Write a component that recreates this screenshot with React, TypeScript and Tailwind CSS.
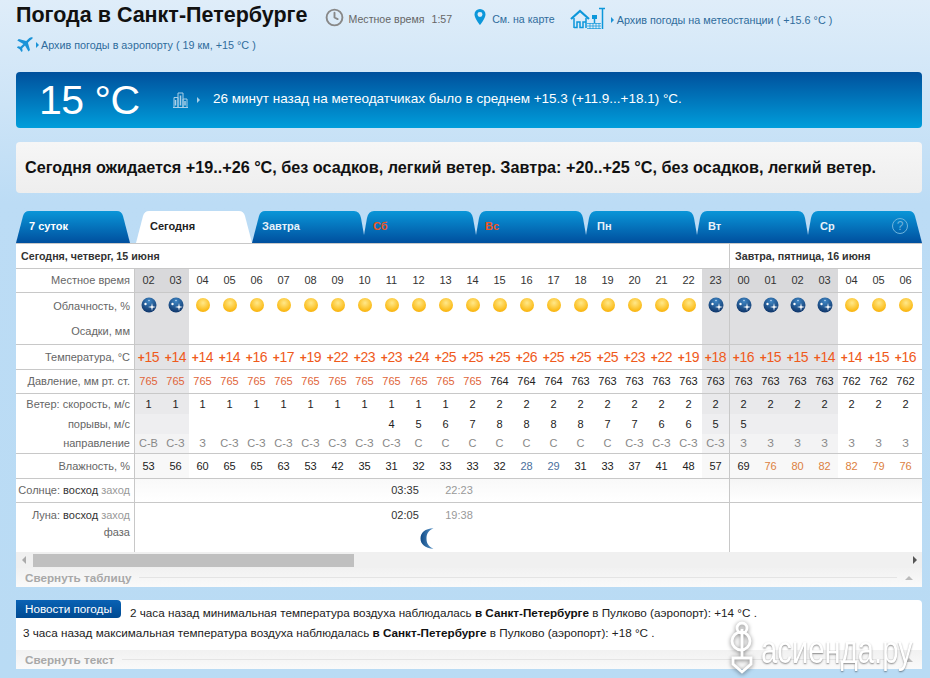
import React from 'react';
import clsx from 'clsx';
import { Clock } from 'lucide-react';

const hoursA = ['02','03','04','05','06','07','08','09','10','11','12','13','14','15','16','17','18','19','20','21','22','23'];
const hoursB = ['00','01','02','03','04','05','06'];
const nightA = [0, 1, 21];
const nightB = [0, 1, 2, 3];

const tempsA = [15,14,14,14,16,17,19,22,23,23,24,25,25,25,26,25,25,25,23,22,19,18];
const tempsB = [16,15,15,14,14,15,16];
const pressA = [765,765,765,765,765,765,765,765,765,765,765,765,765,764,764,764,763,763,763,763,763,763];
const pressB = [763,763,763,763,762,762,762];
const windA = [1,1,1,1,1,1,1,1,1,1,1,1,2,2,2,2,2,2,2,2,2,2];
const windB = [2,2,2,2,2,2,2];
const gustA = ['','','','','','','','','','4','5','6','7','8','8','8','8','7','7','6','6','5'];
const gustB = ['5','','','','','',''];
const dirA = ['С-В','С-З','З','С-З','С-З','С-З','С-З','С-З','С-З','С-З','С','С','С','С','С','С','С','С','С-З','С-З','С-З','С-З'];
const dirB = ['З','З','З','З','З','З','З'];
const humA = [53,56,60,65,65,63,53,42,35,31,32,33,33,32,28,29,31,33,37,41,48,57];
const humB = [69,76,80,82,82,79,76];

const humColor = (v: number) => (v >= 75 ? 'text-[#dc8040]' : v < 30 ? 'text-[#4a6f9c]' : 'text-[#222]');

function Caret({ className }: { className: string }) {
  return <span className={clsx('inline-block border-y-[3px] border-l-[3px] border-y-transparent', className)} />;
}

function SunIcon() {
  return <div className="w-[14px] h-[14px] rounded-full bg-[radial-gradient(circle_at_50%_35%,#ffe88a,#fbbd1c_65%,#f2a000)]" />;
}

function NightIcon() {
  return (
    <svg width="16" height="16" viewBox="0 0 16 16">
      <defs>
        <radialGradient id="nightFill" cx="50%" cy="25%" r="80%">
          <stop offset="0%" stopColor="#3f86c4" />
          <stop offset="100%" stopColor="#0b2f63" />
        </radialGradient>
      </defs>
      <circle cx="8" cy="8" r="7.5" fill="url(#nightFill)" />
      <path d="M11 6 L11.7 9.3 L15 10 L11.7 10.7 L11 14 L10.3 10.7 L7 10 L10.3 9.3 Z" fill="#fff" />
      <circle cx="4.5" cy="7" r="1.2" fill="#fff" />
      <circle cx="8" cy="3.5" r="0.7" fill="#dbeafe" />
    </svg>
  );
}

function PinIcon() {
  return (
    <svg width="12" height="16" viewBox="0 0 13 18" className="block">
      <path fillRule="evenodd" d="M6.5 0A6.2 6.2 0 0 0 .3 6.2C.3 10.4 6.5 18 6.5 18s6.2-7.6 6.2-11.8A6.2 6.2 0 0 0 6.500 0Zm0 3.4a2.8 2.8 0 1 1 0 5.600 2.8 2.8 0 0 1 0-5.600Z" fill="#0c97da" />
    </svg>
  );
}

function StationIcon() {
  return (
    <svg width="35" height="22" viewBox="0 0 35 22" fill="none" stroke="#0c97da" className="block">
      <path d="M1 12 L10 4 L19 12" strokeWidth="2.200" />
      <path d="M4 21 V11 M16 21 V11 M4 20.500 H7 V15 H10 V20.500 H13 V15 H16" strokeWidth="1.500" />
      <rect x="22" y="8" width="5" height="4" fill="#0c97da" stroke="none" />
      <path d="M24.500 12 V16" strokeWidth="1.500" />
      <path d="M17 16.500 H31 M17 19 H31 M17 21.500 H31 M20 16 V22 M23 16 V22 M26 16 V22 M29 16 V22" strokeWidth="0.700" />
      <path d="M32.500 22 V2 M29 1.500 H35" strokeWidth="1.500" />
    </svg>
  );
}

function PlaneIcon() {
  return (
    <svg width="17" height="16" viewBox="0 0 17 16">
      <path d="M16.600 0.500C15.600 -.1 13.800 .5 12.600 1.700L10.200 4.100 2.800 2 1.300 3.500 7.400 6.900 4.600 9.700 2 9.300.9 10.400 3.700 12.200 5.500 15 6.600 13.900 6.200 11.300 9 8.500 12.500 14.600 14 13.100 11.900 5.700 14.300 3.300C15.500 2.100 17.200 1.400 16.600.5Z" fill="#1a93d8" />
    </svg>
  );
}

function BuildingIcon() {
  return (
    <svg width="15" height="16" viewBox="0 0 15 16" fill="none" stroke="#a9cfe8" strokeWidth="1">
      <path d="M1 15.500 V5.500 H5 V15.500 M5 15.500 V1 H10 V15.500 M10 15.500 V7 H14 V15.500 M0 15.500 H15" />
      <path d="M2.500 8 V13.500 M7.500 3.500 V13.500 M12 9 V13.500" strokeWidth="1.500" />
    </svg>
  );
}

function MoonPhase() {
  return (
    <svg width="15" height="21" viewBox="0 0 15 21">
      <defs>
        <linearGradient id="moonFill" x1="0" y1="0" x2="1" y2="0">
          <stop offset="0%" stopColor="#0f4a86" />
          <stop offset="100%" stopColor="#5a95c8" />
        </linearGradient>
      </defs>
      <path d="M13.500 0.300 C5 0.500 0.500 5 0.500 10.500 C0.500 16 5 20.500 13.500 20.700 C8 18.500 6.500 14.500 6.500 10.500 C6.500 6.500 8 2.500 13.500 0.300 Z" fill="url(#moonFill)" />
    </svg>
  );
}

// Tab outline: a straight slanted edge or the narrow notch shared with the neighbouring tab
function tabPath(w: number, straightLeft: boolean, straightRight: boolean) {
  const left = straightLeft ? 'M0 32 L7 5 Q8.500 0 13 0' : 'M0 32 L0 24 L3 7 Q4.500 0 10 0';
  const right = straightRight
    ? `L${w - 13} 0 Q${w - 8.5} 0 ${w - 7} 5 L${w} 32 Z`
    : `L${w - 10} 0 Q${w - 4.5} 0 ${w - 3} 7 L${w} 24 L${w} 32 Z`;
  return `${left} ${right}`;
}

const tabs = [
  { label: '7 суток', w: 114, l: true, r: true, text: 'text-white', pad: 'pl-[13px]' },
  { label: 'Сегодня', w: 116, l: true, r: true, text: 'text-[#222]', pad: 'pl-[14px]', active: true },
  { label: 'Завтра', w: 112, l: true, r: false, text: 'text-[#e8f2fa]', pad: 'pl-[10px]' },
  { label: 'Сб', w: 112, l: false, r: false, text: 'text-[#f0561e]', pad: 'pl-[9px]' },
  { label: 'Вс', w: 110, l: false, r: false, text: 'text-[#f0561e]', pad: 'pl-[9px]' },
  { label: 'Пн', w: 111, l: false, r: false, text: 'text-[#e8f2fa]', pad: 'pl-[11px]' },
  { label: 'Вт', w: 111, l: false, r: false, text: 'text-[#e8f2fa]', pad: 'pl-[11px]' },
  { label: 'Ср', w: 114, l: false, r: true, text: 'text-[#e8f2fa]', pad: 'pl-[12px]' },
];

function Tabs() {
  return (
    <div className="flex h-[32px] font-bold text-[11px]">
      <svg width="0" height="0" className="absolute">
        <defs>
          <linearGradient id="tabFill" x1="0" y1="0" x2="0" y2="1">
            <stop offset="0%" stopColor="#0a96d8" />
            <stop offset="100%" stopColor="#004f9e" />
          </linearGradient>
        </defs>
      </svg>
      {tabs.map((t, i) => (
        <div
          key={t.label}
          className={clsx('relative shrink-0 h-[32px] flex items-center pb-[2px]', t.pad, t.text, i === 1 && 'ml-[6px]')}
          style={{ width: t.w }}
        >
          <svg className="absolute left-0 top-0" width={t.w} height="32">
            <path d={tabPath(t.w, t.l, t.r)} fill={t.active ? '#fff' : 'url(#tabFill)'} />
          </svg>
          <span className="relative">{t.label}</span>
          {t.label === 'Ср' && (
            <span className="absolute right-[14px] top-[7px] w-[16px] h-[16px] rounded-full border border-[#6fb4dd] text-[#6fb4dd] flex items-center justify-center text-[12px] font-normal">?</span>
          )}
        </div>
      ))}
    </div>
  );
}

type RowProps = {
  label?: React.ReactNode;
  h: string;
  night?: string;
  a: React.ReactNode[];
  b: React.ReactNode[];
  cellClass?: string;
  line?: boolean;
};

function Row({ label, h, night, a, b, cellClass, line }: RowProps) {
  const cell = (v: React.ReactNode, i: number, isNight: boolean) => (
    <div
      key={i}
      className={clsx('w-[27px] shrink-0 flex items-center justify-center whitespace-nowrap', isNight && night, cellClass)}
    >
      {v}
    </div>
  );
  return (
    <div className={clsx('flex', h, line && 'border-b border-[#c8c8c8]')}>
      <div className="w-[119px] shrink-0 border-r border-[#c8c8c8] flex items-center justify-end pr-[4px] text-[11px] text-[#666] whitespace-nowrap">
        {label}
      </div>
      {a.map((v, i) => cell(v, i, nightA.includes(i)))}
      <div className="w-px shrink-0 bg-[#c8c8c8]" />
      {b.map((v, i) => cell(v, i, nightB.includes(i)))}
    </div>
  );
}

function Temp({ v }: { v: number }) {
  return (
    <span className="text-[14px] text-[#ef5a1c] tracking-[-0.4px]">
      <span className="font-bold text-[12px]">+</span>
      {v}
    </span>
  );
}

const blank = (n: number) => Array.from({ length: n }, () => '');

function Collapse({ label }: { label: string }) {
  return (
    <div className="h-[19px] bg-gradient-to-b from-[#f1f1f1] to-[#fafafa] flex items-center pl-[9px] pr-[9px]">
      <span className="text-[11.7px] font-bold text-[#a8a8a8] whitespace-nowrap">{label}</span>
      <div className="flex-1 h-px bg-white border-t border-[#e4e4e4] ml-[8px] mr-[8px]" />
      <span className="border-x-[4px] border-b-[4px] border-x-transparent border-b-[#bbb]" />
    </div>
  );
}

export default function App() {
  return (
    <div className="relative w-[930px] h-[678px] overflow-hidden font-['Liberation_Sans',Arial,sans-serif] bg-gradient-to-b from-[#dfedf9] via-[#bcdcf5] via-30% to-[#b9dbf4]">
      <div className="pl-[16px] w-[922px]">
        {/* top links */}
        <div className="flex items-center h-[32px] text-[10.6px]">
          <h1 className="text-[21.5px] leading-none font-bold text-[#111] whitespace-nowrap">Погода в Санкт-Петербурге</h1>
          <Clock className="ml-[17px] mt-[2px] text-[#888]" size={19} strokeWidth={2.4} />
          <span className="ml-[5px] mt-[8px] text-[#666]">Местное время</span>
          <span className="ml-[7px] mt-[8px] text-[#666]">1:57</span>
          <span className="ml-[22px] mt-[2px]"><PinIcon /></span>
          <span className="ml-[6px] mt-[8px] text-[#2f6c9c]">См. на карте</span>
          <span className="ml-[15px] mt-[3px]"><StationIcon /></span>
          <Caret className="ml-[6px] mt-[8px] border-l-[#1a93d8]" />
          <span className="ml-[3px] mt-[8px] text-[10.8px] text-[#2f6c9c]">Архив погоды на метеостанции ( +15.6 °C )</span>
        </div>
        <div className="flex items-center h-[26px] text-[10.8px]">
          <PlaneIcon />
          <Caret className="ml-[3px] border-l-[#1a93d8]" />
          <span className="ml-[2px] text-[#2f6c9c]">Архив погоды в аэропорту ( 19 км, +15 °C )</span>
        </div>

        {/* current temperature */}
        <div className="mt-[14px] h-[56px] rounded-[4px] bg-gradient-to-b from-[#00509c] to-[#009edb] flex items-center text-white">
          <span className="ml-[23px] text-[41px] leading-none tracking-[-0.5px] w-[134px] whitespace-nowrap">15 °C</span>
          <BuildingIcon />
          <Caret className="ml-[9px] border-l-[#a9cfe8]" />
          <span className="ml-[13px] pb-[2px] text-[13.5px] whitespace-nowrap">26 минут назад на метеодатчиках было в среднем +15.3 (+11.9...+18.1) °C.</span>
        </div>

        {/* forecast text */}
        <div className="mt-[14px] h-[51px] rounded-[4px] bg-gradient-to-b from-[#f6f6f6] to-[#eeeeee] flex items-center pl-[9px]">
          <span className="text-[16.2px] font-bold text-[#111] whitespace-nowrap">Сегодня ожидается +19..+26 °C, без осадков, легкий ветер. Завтра: +20..+25 °C, без осадков, легкий ветер.</span>
        </div>

        {/* forecast table */}
        <div className="mt-[18px]">
          <Tabs />
          <div className="bg-white overflow-hidden">
            <div className="flex h-[26px] border-y border-[#c8c8c8] text-[10.7px] text-[#333] font-bold">
              <div className="w-[713px] shrink-0 flex items-center pl-[5px]">Сегодня, четверг, 15 июня</div>
              <div className="w-px shrink-0 bg-[#c8c8c8]" />
              <div className="flex items-center pl-[5px]">Завтра, пятница, 16 июня</div>
            </div>
            <Row label="Местное время" h="h-[24px]" night="bg-[#d9d9db]" line a={hoursA} b={hoursB} cellClass="text-[11px] text-[#333]" />
            <div className="border-b border-[#c8c8c8]">
              <Row
                label="Облачность, %"
                h="h-[26px]"
                night="bg-[#dfdfe1]"
                a={hoursA.map((_, i) => (nightA.includes(i) ? <NightIcon /> : <SunIcon />))}
                b={hoursB.map((_, i) => (nightB.includes(i) ? <NightIcon /> : <SunIcon />))}
                cellClass="pb-[3px]"
              />
              <Row label="Осадки, мм" h="h-[25px]" night="bg-[#dfdfe1]" a={blank(22)} b={blank(7)} />
            </div>
            <Row label="Температура, °C" h="h-[25px]" night="bg-[#e3e3e5]" line a={tempsA.map(v => <Temp v={v} />)} b={tempsB.map(v => <Temp v={v} />)} />
            <Row
              label="Давление, мм рт. ст."
              h="h-[24px]"
              night="bg-[#e8e8ea]"
              line
              a={pressA.map(v => <span className={v >= 765 ? 'text-[#e0643a]' : 'text-[#222]'}>{v}</span>)}
              b={pressB.map(v => <span className="text-[#222]">{v}</span>)}
              cellClass="text-[11px]"
            />
            <div className="border-b border-[#c8c8c8]">
              <Row label="Ветер: скорость, м/с" h="h-[20px]" night="bg-[#e9e9eb]" a={windA} b={windB} cellClass="text-[11px] text-[#222]" />
              <Row label="порывы, м/с" h="h-[20px]" night="bg-[#eeeef0]" a={gustA} b={gustB} cellClass="text-[11px] text-[#222]" />
              <Row label="направление" h="h-[19px]" night="bg-[#f3f3f4]" a={dirA} b={dirB} cellClass="text-[11px] text-[#888]" />
            </div>
            <Row
              label="Влажность, %"
              h="h-[25px]"
              night="bg-[#f8f8f8]"
              line
              a={humA.map(v => <span className={humColor(v)}>{v}</span>)}
              b={humB.map(v => <span className={humColor(v)}>{v}</span>)}
              cellClass="text-[11px]"
            />
            <div className="flex h-[24px] border-b border-[#c8c8c8]">
              <div className="w-[119px] shrink-0 border-r border-[#c8c8c8] flex items-center justify-end pr-[4px] text-[11px] text-[#666] whitespace-nowrap">
                <span>Солнце: <span className="text-[#333]">восход</span> <span className="text-[#999]">заход</span></span>
              </div>
              <div className="w-[594px] shrink-0 flex items-center text-[11px] bg-gradient-to-b from-[#f9f9f9] to-white">
                <div className="w-[243px]" />
                <div className="w-[54px] text-center text-[#333]">03:35</div>
                <div className="w-[54px] text-center text-[#999]">22:23</div>
              </div>
              <div className="w-px shrink-0 bg-[#c8c8c8]" />
              <div className="flex-1 bg-gradient-to-b from-[#f5f5f5] to-white" />
            </div>
            <div className="flex h-[49px]">
              <div className="w-[119px] shrink-0 border-r border-[#c8c8c8] flex flex-col items-end pt-[4px] pr-[4px] text-[11px] text-[#666] whitespace-nowrap">
                <span>Луна: <span className="text-[#333]">восход</span> <span className="text-[#999]">заход</span></span>
                <span>фаза</span>
              </div>
              <div className="w-[594px] shrink-0">
                <div className="flex h-[25px] text-[11px] items-center">
                  <div className="w-[243px]" />
                  <div className="w-[54px] text-center text-[#333]">02:05</div>
                  <div className="w-[54px] text-center text-[#999]">19:38</div>
                </div>
                <div className="pl-[285px]"><MoonPhase /></div>
              </div>
              <div className="w-px shrink-0 bg-[#c8c8c8]" />
            </div>
          </div>

          {/* horizontal scrollbar */}
          <div className="flex items-center h-[16px] bg-[#f0f0f0]">
            <span className="ml-[6px] border-y-[4px] border-r-[4px] border-y-transparent border-r-[#aaa]" />
            <div className="ml-[7px] w-[321px] h-[13px] bg-[#c0c0c0]" />
            <span className="ml-auto mr-[5px] border-y-[4px] border-l-[4px] border-y-transparent border-l-[#555]" />
          </div>
          <Collapse label="Свернуть таблицу" />
        </div>

        {/* weather news */}
        <div className="mt-[13px] h-[69px] bg-white rounded-tr-[4px] flex flex-col text-[11.7px] text-[#222]">
          <div className="flex h-[22px]">
            <div className="w-[105px] h-[18px] rounded-r-[4px] bg-gradient-to-b from-[#0a62b4] to-[#004a92] text-white flex items-center pl-[9px] whitespace-nowrap">Новости погоды</div>
            <div className="ml-[9px] mt-[4px] whitespace-nowrap">
              2 часа назад минимальная температура воздуха наблюдалась <b className="text-[#111]">в Санкт-Петербурге</b> в Пулково (аэропорт): +14 °C .
            </div>
          </div>
          <div className="pl-[7px] mt-[2px] whitespace-nowrap">
            3 часа назад максимальная температура воздуха наблюдалась <b className="text-[#111]">в Санкт-Петербурге</b> в Пулково (аэропорт): +18 °C .
          </div>
          <div className="mt-auto">
            <Collapse label="Свернуть текст" />
          </div>
        </div>
      </div>

      {/* watermark */}
      <div className="absolute left-[729px] top-[621px] text-white [filter:drop-shadow(0_1px_2px_rgba(0,0,0,0.5))]">
        <svg width="26" height="54" viewBox="0 0 26 54" fill="none" stroke="#fff" strokeWidth="2.800">
          <circle cx="13" cy="7" r="5" />
          <circle cx="12" cy="20" r="9" />
          <path d="M13 8 V38" />
          <path d="M4 37 H22 V43 L13 51 L4 43 Z" />
        </svg>
      </div>
      <span className="absolute left-[761px] top-[628px] origin-left [transform:scaleX(0.77)] text-[38px] leading-[44px] text-white whitespace-nowrap [text-shadow:0_1px_2px_rgba(0,0,0,0.45)]">асиенда.ру</span>
    </div>
  );
}
